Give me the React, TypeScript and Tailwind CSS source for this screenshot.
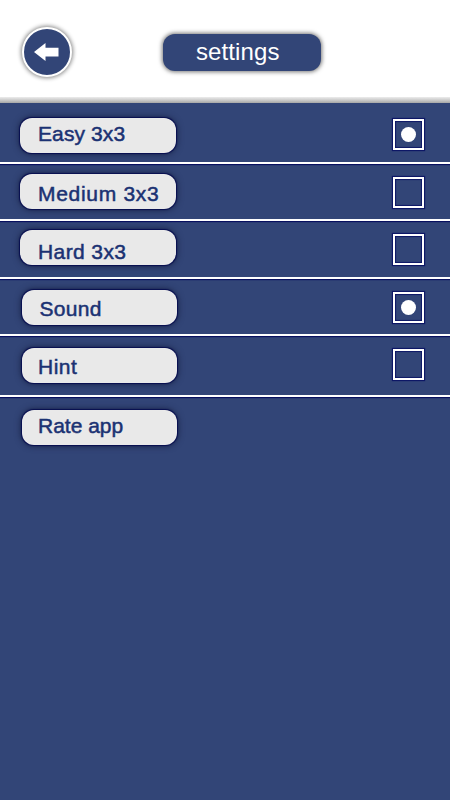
import React from 'react';

interface SettingRow {
  label: string;
  checked?: boolean;
  row: string;
  pill: string;
  text: string;
  box?: string;
}

const divider = 'border-b-2 border-white shadow-[0_1px_1px_#08105f]';

const rows: SettingRow[] = [
  { label: 'Easy 3x3', checked: true, row: `h-[61px] ${divider}`, pill: 'ml-5 mt-[15px] w-[156px] pl-[18px]', text: 'pt-[4px] tracking-[0.1px]', box: 'mt-4' },
  { label: 'Medium 3x3', checked: false, row: `h-[57px] ${divider}`, pill: 'ml-5 mt-[10px] w-[156px] pl-[18px]', text: 'pt-[8px] tracking-[0.7px]', box: 'mt-[13px]' },
  { label: 'Hard 3x3', checked: false, row: `h-[58px] ${divider}`, pill: 'ml-5 mt-[9px] w-[156px] pl-[18px]', text: 'pt-[10px] tracking-[0.4px]', box: 'mt-[13px]' },
  { label: 'Sound', checked: true, row: `h-[57px] ${divider}`, pill: 'ml-[21.5px] mt-[11px] w-[155px] pl-[18px]', text: 'pt-[7px] tracking-[0.3px]', box: 'mt-[13px]' },
  { label: 'Hint', checked: false, row: `h-[61px] ${divider}`, pill: 'ml-[21.5px] mt-[12px] w-[155px] pl-[16.5px]', text: 'pt-[7px] tracking-[0.5px]', box: 'mt-[13px]' },
  { label: 'Rate app', row: 'h-[60px]', pill: 'ml-[21.5px] mt-[12.5px] w-[155px] pl-[16.5px]', text: 'pt-[4px]' },
];

function Checkbox({ checked, className }: { checked: boolean; className?: string }) {
  return (
    <div
      role="checkbox"
      aria-checked={checked}
      className={`mr-[26px] flex size-[31px] shrink-0 items-center justify-center border-2 border-white shadow-[0_0_1px_1px_#0d1766,inset_0_0_1px_1px_#0d1766] ${className ?? ''}`}
    >
      {checked ? <span className="size-[15px] rounded-full bg-white" /> : null}
    </div>
  );
}

function Row({ item }: { item: SettingRow }) {
  return (
    <div className={`flex items-start justify-between ${item.row}`}>
      <div
        className={`h-[35px] rounded-[12px] bg-[#e9e9e9] shadow-[0_0_1px_0.5px_#070e50,0_0_6px_1px_#1a2448] ${item.pill}`}
      >
        <div
          className={`whitespace-nowrap text-[21px] leading-[24px] text-[#1b3273] [-webkit-text-stroke:0.5px_#1b3273] ${item.text}`}
        >
          {item.label}
        </div>
      </div>
      {item.box ? <Checkbox checked={!!item.checked} className={item.box} /> : null}
    </div>
  );
}

export default function App() {
  return (
    <div className="h-[800px] w-[450px] overflow-hidden bg-[#324577] font-['Liberation_Sans',Arial,sans-serif]">
      <header className="flex h-[97px] items-start bg-white">
        <button
          aria-label="Back"
          className="ml-[22px] mt-[27px] flex size-[50px] shrink-0 items-center justify-center rounded-full border-2 border-white bg-[#324577] shadow-[0_0_4px_1px_#858585]"
        >
          <svg width="25" height="18" viewBox="0 0 25 18" fill="#fff" className="-ml-[1px]">
            <path d="M0 9 11.5 0v4.8H24.5v8.6H11.5V18z" />
          </svg>
        </button>
        <h1 className="ml-[91px] mt-[34px] h-[37px] w-[158px] rounded-[12px] bg-[#324577] pl-[33px] text-[24px] leading-[36px] tracking-[0.1px] text-white shadow-[0_0_4px_1px_#777]">
          settings
        </h1>
      </header>
      <div className="h-[6px] bg-linear-to-b from-[#ececec] via-[#cccccc] to-[#a6a6a6]" />
      <main>
        {rows.map((item) => (
          <Row key={item.label} item={item} />
        ))}
      </main>
    </div>
  );
}
